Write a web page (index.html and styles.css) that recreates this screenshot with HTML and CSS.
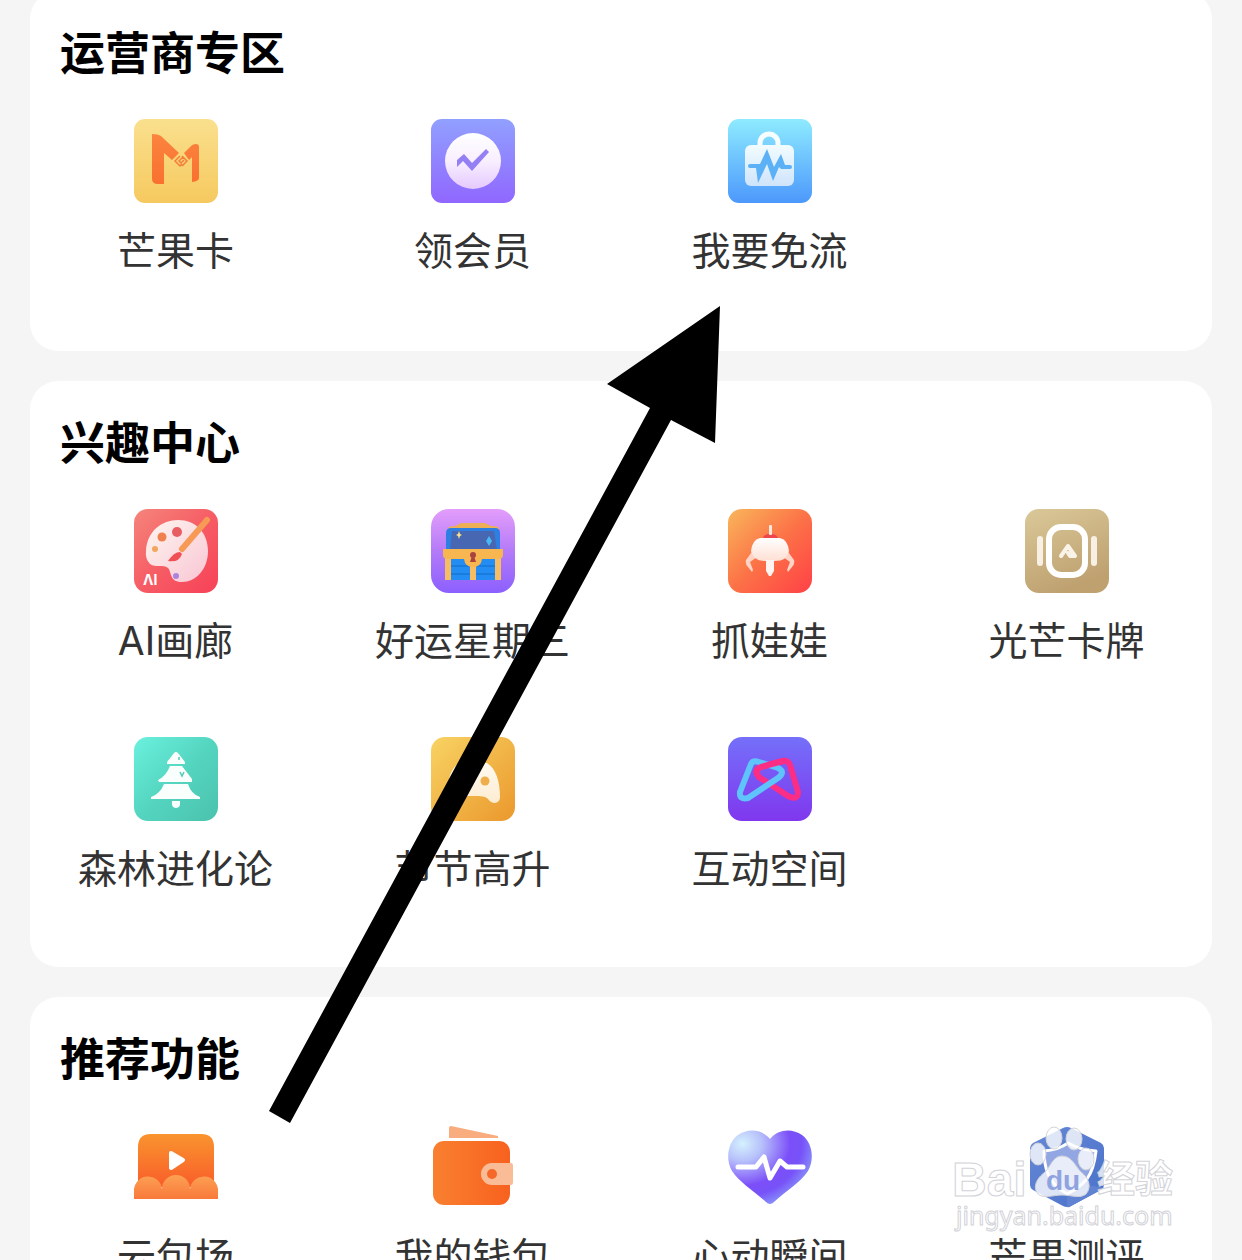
FILE: index.html
```html
<!DOCTYPE html>
<html lang="zh-CN">
<head>
<meta charset="utf-8">
<meta name="viewport" content="width=device-width, initial-scale=1">
<title>功能中心</title>
<link rel="stylesheet" href="styles.css">
</head>
<body>
<main class="page">
  <section class="card">
    <h2 class="card-title">运营商专区</h2>
    <nav class="grid">
      <a class="item" href="#mango-card">
        <svg class="icon" viewBox="0 0 84 84" aria-hidden="true">
          <defs>
            <linearGradient id="g1" x2="0" y2="1"><stop stop-color="#fae08e"/><stop offset="1" stop-color="#f6c95f"/></linearGradient>
            <linearGradient id="g1m" x2="0" y2="1"><stop stop-color="#fb843f"/><stop offset="1" stop-color="#f9702f"/></linearGradient>
          </defs>
          <rect width="84" height="84" rx="11" fill="url(#g1)"/>
          <path d="M18 15Q24 15 27 17L45 34 38 41 30 34V65H24Q18 65 18 60ZM50 34 57 27Q59 25 62 25 65 25 65 28V59Q65 62 58 63V38L55 41Z" fill="url(#g1m)"/>
          <path d="M46 37 41 42 46 47 48 45M48 37 53 42 48 47M49 38 45 42 47 44 50 41" fill="none" stroke="#f47d3c" stroke-width="1.5"/>
        </svg>
        <span class="label">芒果卡</span>
      </a>
      <a class="item" href="#membership">
        <svg class="icon" viewBox="0 0 84 84" aria-hidden="true">
          <defs>
            <linearGradient id="g2" x2="0" y2="1"><stop stop-color="#91a0ff"/><stop offset="1" stop-color="#9067ff"/></linearGradient>
            <linearGradient id="g2c" x2="0" y2="1"><stop stop-color="#fff"/><stop offset=".5" stop-color="#f8efff"/><stop offset="1" stop-color="#e5c9ff"/></linearGradient>
          </defs>
          <rect width="84" height="84" rx="11" fill="url(#g2)"/>
          <circle cx="42" cy="42" r="28" fill="url(#g2c)"/>
          <path d="M26 48V41L33 35 41 44 55 30 58 33 41 52 32 42Z" fill="#947ff5"/>
        </svg>
        <span class="label">领会员</span>
      </a>
      <a class="item" href="#free-data">
        <svg class="icon" viewBox="0 0 84 84" aria-hidden="true">
          <defs>
            <linearGradient id="g3" x2="0" y2="1"><stop stop-color="#8eebff"/><stop offset="1" stop-color="#4c98fc"/></linearGradient>
            <linearGradient id="g3b" x2="0" y2="1"><stop stop-color="#f2fcff"/><stop offset="1" stop-color="#cfe4fb"/></linearGradient>
          </defs>
          <rect width="84" height="84" rx="11" fill="url(#g3)"/>
          <path d="M32 28V24A9 9 0 0 1 50 24V28" fill="none" stroke="#f6fdff" stroke-width="5"/>
          <rect x="17" y="26" width="49" height="41" rx="6" fill="url(#g3b)"/>
          <path d="M22 45H32L39 30 46 48 53 35 57 46H62Q64 46 64 48 64 50 62 50H53L51 48 45 62 39 45 30 64 28 49H22Q20 49 20 47 20 45 22 45Z" fill="#5bb0f6"/>
        </svg>
        <span class="label">我要免流</span>
      </a>
    </nav>
  </section>

  <section class="card">
    <h2 class="card-title">兴趣中心</h2>
    <nav class="grid">
      <a class="item" href="#ai-gallery">
        <svg class="icon" viewBox="0 0 84 84" aria-hidden="true">
          <defs>
            <linearGradient id="g4" x2="1" y2="1"><stop stop-color="#f5857b"/><stop offset=".5" stop-color="#f65d65"/><stop offset="1" stop-color="#f74157"/></linearGradient>
            <linearGradient id="g4p" x2="1" y2="1"><stop stop-color="#fff5ef"/><stop offset="1" stop-color="#f8c6d4"/></linearGradient>
          </defs>
          <rect width="84" height="84" rx="14" fill="url(#g4)"/>
          <path d="M12 42C13 22 28 11 44 11 62 11 74 24 74 42 74 60 62 73 48 73 35 73 38 63 34 59 29 55 22 59 16 55Q11 50 12 42Z" fill="url(#g4p)"/>
          <circle cx="28" cy="28" r="4.500" fill="#f0814e"/>
          <circle cx="43" cy="23" r="5" fill="#e85d62"/>
          <circle cx="21" cy="40" r="3" fill="#f2a55c"/>
          <circle cx="42" cy="67" r="3" fill="#ad82dc"/>
          <path d="M73 11 48 40" stroke="#f79a55" stroke-width="6" stroke-linecap="round"/>
          <path d="M48 45Q45 54 34 52 40 43 46 43Z" fill="#f04f55"/>
          <text class="icon-text" x="9" y="76">ΛI</text>
        </svg>
        <span class="label">AI画廊</span>
      </a>
      <a class="item" href="#lucky-star">
        <svg class="icon" viewBox="0 0 84 84" aria-hidden="true">
          <defs>
            <linearGradient id="g5" x2="0" y2="1"><stop stop-color="#e39dfb"/><stop offset=".5" stop-color="#b47bf8"/><stop offset="1" stop-color="#8c60ff"/></linearGradient>
          </defs>
          <rect width="84" height="84" rx="18" fill="url(#g5)"/>
          <path d="M17 19Q18 17 24 17L30 14H54L60 17Q67 17 68 19V24H17Z" fill="#edae58"/>
          <path d="M20 19H64Q69 19 69 24V42H15V24Q15 19 20 19Z" fill="#2e7fe2"/>
          <path d="M21 22H63L66 41H19Z" fill="#4767b2"/>
          <path d="M28 22 29 25 31 26 29 27 28 30 27 27 25 26 27 25Z" fill="#f8e390"/>
          <path d="M58 27 61 32 58 37 55 32Z" fill="#48b8f5"/>
          <path d="M14 48H70V71H14Z" fill="#238df3"/>
          <path d="M20 57H64M20 65H64" stroke="#1878d8" stroke-width="1.500"/>
          <path d="M14 48H20V71H14ZM64 48H70V71H64ZM39 52H45V71H39Z" fill="#f7bd64"/>
          <path d="M12 40H72V46Q72 50 67 50H51Q50 58 42 58 34 58 33 50H17Q12 50 12 46Z" fill="#f8b650"/>
          <circle cx="42" cy="46" r="3" fill="#a9433f"/><path d="M41 47H43L45 53H39Z" fill="#a9433f"/>
        </svg>
        <span class="label">好运星期三</span>
      </a>
      <a class="item" href="#claw-machine">
        <svg class="icon" viewBox="0 0 84 84" aria-hidden="true">
          <defs>
            <linearGradient id="g6" x2="1" y2="1"><stop stop-color="#f9b65b"/><stop offset=".5" stop-color="#fc7247"/><stop offset="1" stop-color="#ff4046"/></linearGradient>
            <linearGradient id="g6b" x2="0" y2="1"><stop stop-color="#fff"/><stop offset="1" stop-color="#ffdfd3"/></linearGradient>
          </defs>
          <rect width="84" height="84" rx="14" fill="url(#g6)"/>
          <path d="M35 30Q35 25 42 25 50 25 50 30Z" fill="#ee464d"/>
          <rect x="41" y="16" width="3" height="10" rx="1" fill="#ffe9df"/>
          <path d="M26 40 18 51Q17 55 20 58L24 63 25 61 22 53 29 48ZM58 40 66 51Q67 55 64 58L60 63 59 61 62 53 55 48Z" fill="#ffd3c5"/>
          <path d="M32 29H52Q60 31 61 42 59 52 47 52H37Q25 52 23 42 24 31 32 29Z" fill="url(#g6b)"/>
          <path d="M38 51H46V62L43 67H41L38 62Z" fill="#fff4ef"/>
        </svg>
        <span class="label">抓娃娃</span>
      </a>
      <a class="item" href="#light-cards">
        <svg class="icon" viewBox="0 0 84 84" aria-hidden="true">
          <defs>
            <linearGradient id="g7" x2=".4" y2="1"><stop stop-color="#dac899"/><stop offset="1" stop-color="#bfa170"/></linearGradient>
          </defs>
          <rect width="84" height="84" rx="14" fill="url(#g7)"/>
          <rect x="24" y="18" width="36" height="48" rx="12" fill="none" stroke="#fff" stroke-width="6"/>
          <rect x="12" y="27" width="6" height="30" rx="3" fill="#f8f0e4"/><rect x="66" y="27" width="6" height="30" rx="3" fill="#f8f0e4"/>
          <path d="M36 47 43 37 50 47 45 47 43 44" fill="none" stroke="#faf3e8" stroke-width="4" stroke-linejoin="round" stroke-linecap="round"/>
        </svg>
        <span class="label">光芒卡牌</span>
      </a>
      <a class="item" href="#forest">
        <svg class="icon" viewBox="0 0 84 84" aria-hidden="true">
          <defs>
            <linearGradient id="g8" x2="1" y2="1"><stop stop-color="#6af1de"/><stop offset=".5" stop-color="#54d5c0"/><stop offset="1" stop-color="#4bc2ad"/></linearGradient>
          </defs>
          <rect width="84" height="84" rx="14" fill="url(#g8)"/>
          <path d="M40 16Q42 14 44 16L51 25V27H33V25ZM36 29H48L58 42V45H25L24 43Q32 39 36 29ZM30 47H54Q57 57 66 60V62H17V60Q26 57 30 47ZM38 64H46V68Q45 71 42 71 39 71 38 68Z" fill="#f8fffd"/>
          <path d="M45 20V23M46 35 48 39 50 35" fill="none" stroke="#55c9b6" stroke-width="1.500"/>
        </svg>
        <span class="label">森林进化论</span>
      </a>
      <a class="item" href="#rising">
        <svg class="icon" viewBox="0 0 84 84" aria-hidden="true">
          <defs>
            <linearGradient id="g9" x2="1" y2="1"><stop stop-color="#f8d363"/><stop offset="1" stop-color="#eb982d"/></linearGradient>
            <linearGradient id="g9c" x2="0" y2="1"><stop stop-color="#fffaf0"/><stop offset="1" stop-color="#fdecd1"/></linearGradient>
          </defs>
          <rect width="84" height="84" rx="14" fill="url(#g9)"/>
          <path d="M28 26H56C65 32 69 44 69 60 69 67 61 68 57 62 54 59 50 59 42 59 34 59 30 59 27 62 23 66 20 65 20 58 16 48 17 34 28 26Z" fill="url(#g9c)"/>
          <circle cx="54" cy="44" r="4.500" fill="#efad4b"/>
        </svg>
        <span class="label">节节高升</span>
      </a>
      <a class="item" href="#interactive">
        <svg class="icon" viewBox="0 0 84 84" aria-hidden="true">
          <defs>
            <linearGradient id="g10" x2="0" y2="1"><stop stop-color="#7470fa"/><stop offset="1" stop-color="#8037ee"/></linearGradient>
          </defs>
          <rect width="84" height="84" rx="14" fill="url(#g10)"/>
          <g fill="none" stroke-width="6" stroke-linejoin="round" stroke-linecap="round">
            <path d="M34 42 60 59Q70 64 70 55L62 28Q60 23 55 24L33 30Q25 33 31 40" stroke="#fc2d85"/>
            <path d="M23 27 12 55Q11 63 20 61L50 41Q58 35 50 31L31 25Q25 23 23 27Z" stroke="#5ec4fb"/>
            <path d="M31 40Q25 33 33 30L55 24" stroke="#fc2d85"/>
          </g>
        </svg>
        <span class="label">互动空间</span>
      </a>
    </nav>
  </section>

  <section class="card">
    <h2 class="card-title">推荐功能</h2>
    <nav class="grid">
      <a class="item" href="#cloud-cinema">
        <svg class="icon" viewBox="0 0 84 84" aria-hidden="true">
          <defs>
            <linearGradient id="g11" x2="0" y2="1"><stop stop-color="#f9942e"/><stop offset="1" stop-color="#f95d2a"/></linearGradient>
            <linearGradient id="g11c" x2="0" y2="1"><stop stop-color="#fca154"/><stop offset="1" stop-color="#f9793a"/></linearGradient>
          </defs>
          <path d="M4 22Q4 9 17 9H67Q80 9 80 22V62H4Z" fill="url(#g11)"/>
          <path d="M0 74V67A14 14 0 0 1 28 64 14 14 0 0 1 56 64 14 14 0 0 1 84 67V74Z" fill="url(#g11c)"/>
          <path d="M37 28 49 35 37 43Z" fill="#fff" stroke="#fff" stroke-width="4" stroke-linejoin="round"/>
        </svg>
        <span class="label">云包场</span>
      </a>
      <a class="item" href="#wallet">
        <svg class="icon" viewBox="0 0 84 84" aria-hidden="true">
          <defs>
            <linearGradient id="g12"><stop stop-color="#f98030"/><stop offset="1" stop-color="#f8611f"/></linearGradient>
          </defs>
          <path d="M18 3Q18 1 20 1L67 11V13H18Z" fill="#f9ac7d"/>
          <rect x="2" y="16" width="77" height="64" rx="11" fill="url(#g12)"/>
          <path d="M61 38H80Q82 38 82 41V57Q82 60 80 60H61A11 11 0 0 1 61 38Z" fill="#fabb97"/>
          <circle cx="61" cy="49" r="5" fill="#f5682a"/>
        </svg>
        <span class="label">我的钱包</span>
      </a>
      <a class="item" href="#heart-moments">
        <svg class="icon" viewBox="0 0 84 84" aria-hidden="true">
          <defs>
            <radialGradient id="g13" cx=".17" cy=".18" r=".95"><stop stop-color="#d5f1fd"/><stop offset=".25" stop-color="#b6c0fb"/><stop offset=".6" stop-color="#7c4ff9"/><stop offset=".75" stop-color="#7752f8"/><stop offset="1" stop-color="#8ea5fa"/></radialGradient>
          </defs>
          <path d="M42 14C50 4 64 3 74 10 84 17 87 34 80 46 73 57 58 66 46 77Q42 81 38 77C26 66 11 57 4 46-3 34 0 17 10 10 20 3 34 4 42 14Z" fill="url(#g13)"/>
          <path d="M10 42H28L36 32 42 53 52 36 59 42H75" fill="none" stroke="#fff" stroke-width="5" stroke-linecap="round" stroke-linejoin="round"/>
        </svg>
        <span class="label">心动瞬间</span>
      </a>
      <a class="item" href="#mango-review">
        <svg class="icon" viewBox="0 0 84 84" aria-hidden="true">
          <defs>
            <linearGradient id="g14" x2="1" y2="1"><stop stop-color="#6688d6"/><stop offset="1" stop-color="#4a71ca"/></linearGradient>
          </defs>
          <path d="M38 3Q42 1 46 3L76 18Q79 20 79 23V60Q79 63 76 65L46 81Q42 83 38 81L8 65Q5 63 5 60V23Q5 20 8 18Z" fill="url(#g14)"/>
          <path d="M42 56 79 63 46 81Q44 83 42 82Z" fill="#5f82d2"/>
          <path d="M19 26Q33 25 43 18 55 25 71 26 69 44 62 54 53 64 42 69 28 61 23 49 19 39 19 26Z" fill="#91a6e2" stroke="#fff" stroke-width="3" stroke-linejoin="round"/>
        </svg>
        <span class="label">芒果测评</span>
      </a>
    </nav>
  </section>

  <svg class="arrow" viewBox="265 300 460 830" aria-hidden="true">
    <path d="M720 306 715 443 671 420 290 1123 269 1111 650 408 607 384Z"/>
  </svg>

  <svg class="watermark" viewBox="0 0 250 125" role="img" aria-label="Baidu 经验">
    <g fill="#fff" fill-opacity=".8" stroke="#d2d2d8" stroke-width="1">
      <ellipse cx="98" cy="39" rx="8" ry="11"/>
      <ellipse cx="114" cy="23" rx="8" ry="11"/>
      <ellipse cx="134" cy="24" rx="8" ry="11"/>
      <ellipse cx="146" cy="44" rx="8" ry="11"/>
      <path d="M122 41C132 41 135 51 141 57 149 63 152 72 146 79 140 84 131 80 122 80 113 80 104 84 98 79 92 72 97 63 105 57 111 51 113 41 122 41Z"/>
      <text class="wm-brand" x="12" y="81">Bai</text>
      <text class="wm-cn" x="157" y="77">经验</text>
      <text class="wm-url" x="16" y="110">jingyan.baidu.com</text>
    </g>
    <text class="wm-du" x="106" y="75">du</text>
  </svg>
</main>
</body>
</html>
```
FILE: styles.css
```css
* {
  box-sizing: border-box;
}

body {
  margin: 0;
  background: #f5f5f5;
  color: #333;
  font-family: Inter, "Noto Sans CJK SC", sans-serif;
}

/* Scrolled viewport: the first card starts just above the top edge. */
.page {
  position: relative;
  display: flex;
  flex-direction: column;
  gap: 30px;
  height: 100vh;
  padding: 0 30px;
  overflow: hidden;
}

.card {
  flex: none;
  padding: 33px 0 2px;
  border-radius: 28px;
  background: #fff;
}

.card:first-child {
  margin-top: -9px;
  padding-bottom: 4px;
}

.card-title {
  margin: 0 0 35px;
  padding: 0 30px;
  color: #000;
  font-size: 45px;
  font-weight: 700;
  line-height: 60px;
}

.grid {
  display: grid;
  grid-template-columns: repeat(4, 1fr);
  margin: 0 -3px;
}

.item {
  display: flex;
  flex-direction: column;
  align-items: center;
  gap: 20px;
  padding-bottom: 68px;
  color: inherit;
  text-decoration: none;
}

.icon {
  display: block;
  width: 84px;
  height: 84px;
}

.icon-text {
  fill: #fff;
  font: 700 14px Inter, sans-serif;
}

.label {
  font-size: 39px;
  line-height: 56px;
  white-space: nowrap;
}

.arrow {
  position: absolute;
  top: 300px;
  left: 265px;
  width: 460px;
  height: 830px;
  pointer-events: none;
}

.watermark {
  position: absolute;
  top: 1115px;
  left: 940px;
  width: 250px;
  height: 125px;
  pointer-events: none;
}

.wm-brand {
  font: 700 48px "Liberation Sans", sans-serif;
}

.wm-cn {
  font: 700 38px "Noto Sans CJK SC", sans-serif;
}

.wm-url {
  font: 400 25px "Noto Sans", sans-serif;
}

.wm-du {
  fill: #8fa3df;
  font: 700 28px "Liberation Sans", sans-serif;
}
```
